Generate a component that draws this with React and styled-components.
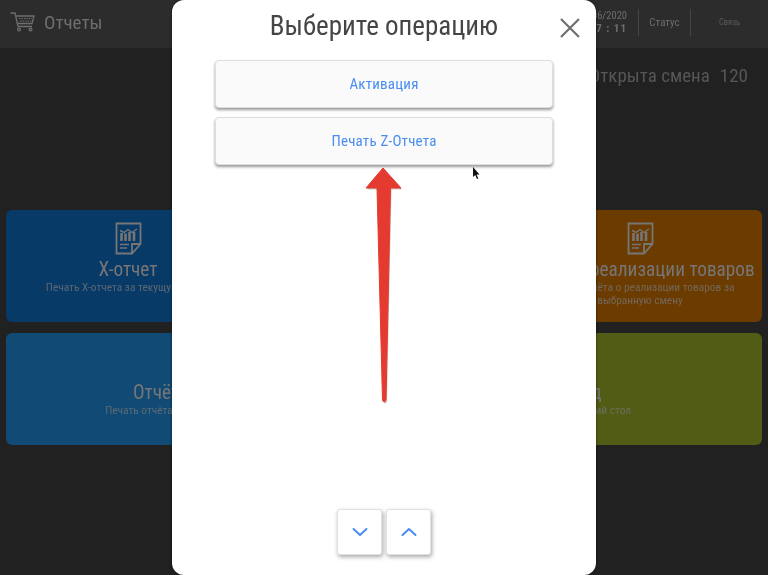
import React from "react";
import styled, { createGlobalStyle } from "styled-components";

const Global = createGlobalStyle`
  html, body { margin: 0; padding: 0; background: #212121; }
  * { box-sizing: border-box; }
`;

const Page = styled.div`
  position: relative;
  width: 768px;
  height: 575px;
  overflow: hidden;
  background: #212121;
  font-family: Roboto, "Liberation Sans", sans-serif;
  font-stretch: condensed;
  filter: blur(0.6px);
`;

const Header = styled.header`
  display: flex;
  align-items: center;
  height: 48px;
  padding-bottom: 4px;
  background: #2c2c2c;
  color: #6e6e6e;
`;

const Brand = styled.div`
  display: flex;
  align-items: center;
  gap: 9px;
  padding-left: 10px;
  font-size: 19px;
  flex: 1;
`;

const DateBlock = styled.div`
  width: 70px;
  font-size: 10.5px;
  line-height: 13px;
  text-align: right;
  padding-right: 11px;
  white-space: nowrap;
  & b { font-weight: 700; font-size: 11px; letter-spacing: 1px; }
`;

const HeaderCell = styled.div`
  width: ${(p) => p.$w}px;
  height: 27px;
  border-left: 1px solid #454545;
  display: flex;
  align-items: center;
  justify-content: center;
  font-size: ${(p) => p.$size}px;
  color: ${(p) => p.$color};
`;

const ShiftRow = styled.div`
  display: flex;
  justify-content: flex-end;
  gap: 10px;
  height: 162px;
  padding: 17px 20px 0 0;
  font-size: 19px;
  line-height: 22px;
  color: #565656;
`;

const Rows = styled.div`
  display: flex;
  flex-direction: column;
  gap: 11px;
  padding: 0 6px;
`;

const Row = styled.div`
  display: flex;
  gap: 12px;
`;

const Card = styled.div`
  width: ${(p) => p.$w}px;
  height: 112px;
  border-radius: 6px;
  background: ${(p) => p.$bg};
  color: #767676;
  display: flex;
  flex-direction: column;
  align-items: center;
  justify-content: ${(p) => (p.$icon ? "flex-start" : "center")};
  padding: ${(p) => (p.$icon ? "12px 20px 0" : "20px 0 0")};
  text-align: center;
`;

const CardTitle = styled.div`
  font-size: 19.3px;
  line-height: 23px;
  margin-top: ${(p) => (p.$icon ? "3px" : "0")};
  white-space: nowrap;
`;

const CardText = styled.div`
  font-size: 11.4px;
  line-height: 13px;
  opacity: 0.75;
  white-space: ${(p) => (p.$nowrap ? "nowrap" : "normal")};
`;

const Modal = styled.section`
  position: absolute;
  left: 172px;
  top: 0;
  width: 424px;
  height: 575px;
  background: #fff;
  border-radius: 12px;
  box-shadow: 0 0 3px rgba(0, 0, 0, 0.6);
  display: flex;
  flex-direction: column;
  align-items: center;
`;

const ModalHead = styled.div`
  position: relative;
  width: 100%;
  height: 60px;
  display: flex;
  justify-content: center;
  padding-top: 10px;
  font-size: 27px;
  line-height: 32px;
  color: #454545;
`;

const Close = styled.svg`
  position: absolute;
  right: 15px;
  top: 17px;
`;

const Options = styled.div`
  display: flex;
  flex-direction: column;
  gap: 9px;
  flex: 1;
`;

const Option = styled.button`
  width: 338px;
  height: 48px;
  background: #fafafa;
  border: 1px solid #dedede;
  border-radius: 4px;
  box-shadow: 0 2px 3px rgba(0, 0, 0, 0.4);
  color: #4a8df0;
  font-family: inherit;
  font-stretch: condensed;
  font-size: 15px;
  letter-spacing: 0.2px;
`;

const Pager = styled.div`
  display: flex;
  gap: 4px;
  margin-bottom: 20px;
`;

const PagerButton = styled.button`
  width: 45px;
  height: 46px;
  padding: 0;
  background: #fff;
  border: 1px solid #e2e2e2;
  border-radius: 3px;
  box-shadow: 1px 2px 4px rgba(0, 0, 0, 0.35);
  display: flex;
  align-items: center;
  justify-content: center;
`;

const Overlay = styled.svg`
  position: absolute;
  left: 0;
  top: 0;
  pointer-events: none;
`;

const CartIcon = () => (
  <svg width="25" height="20" viewBox="0 0 25 20" fill="none" stroke="#6e6e6e" strokeWidth="1.3">
    <path d="M0.5 1H5L8 14.5H22" />
    <path d="M5.6 4H24L22 11.5H7.3" />
    <path d="M9 6.5H22M10 9H21" strokeWidth="1" strokeDasharray="1.5 1" />
    <circle cx="9" cy="17.5" r="1.4" />
    <circle cx="20.5" cy="17.5" r="1.4" />
  </svg>
);

const ReportIcon = () => (
  <svg width="27" height="33" viewBox="0 0 27 33" fill="none" stroke="#767676" strokeWidth="1.8">
    <path d="M1.5 1.5H25.5V22L17 31.5H1.5Z" />
    <path d="M25.5 22H17V31.5" />
    <path d="M5 8.5L9 10.5L13 7.5L17 10.5L22 7" strokeWidth="1.4" />
    <path d="M6.5 11V19M10.5 11.5V19M14.5 10V19M19 10V19" strokeWidth="2.6" />
    <path d="M5 22.5H14M5 26H12" strokeWidth="1.4" />
  </svg>
);

const Chevron = ({ up }) => (
  <svg width="16" height="10" viewBox="0 0 16 10" fill="none" stroke="#4a8df0" strokeWidth="2" strokeLinecap="round" strokeLinejoin="round">
    <path d={up ? "M1.5 8L8 2L14.5 8" : "M1.5 2L8 8L14.5 2"} />
  </svg>
);

export default function App() {
  return (
    <Page>
      <Global />
      <Header>
        <Brand>
          <CartIcon />
          <span>Отчеты</span>
        </Brand>
        <DateBlock>
          <div>05/06/2020</div>
          <b>17 : 11</b>
        </DateBlock>
        <HeaderCell $w={52} $size={11} $color="#6e6e6e">Статус</HeaderCell>
        <HeaderCell $w={78} $size={8.5} $color="#5a5a5a">Связь</HeaderCell>
      </Header>
      <ShiftRow>
        <span>Открыта смена</span>
        <span>120</span>
      </ShiftRow>
      <Rows>
        <Row>
          <Card $w={244} $bg="#083a68" $icon>
            <ReportIcon />
            <CardTitle $icon>X-отчет</CardTitle>
            <CardText>Печать X-отчета за текущую смену</CardText>
          </Card>
          <Card $w={244} $bg="#083a68" $icon />
          <Card $w={244} $bg="#6b3b00" $icon>
            <ReportIcon />
            <CardTitle $icon>Отчёт о реализации товаров</CardTitle>
            <CardText>Печать отчёта о реализации товаров за выбранную смену</CardText>
          </Card>
        </Row>
        <Row>
          <Card $w={300} $bg="#104a75">
            <CardTitle>Отчёт</CardTitle>
            <CardText $nowrap>Печать отчёта смены</CardText>
          </Card>
          <Card $w={60} $bg="#104a75" />
          <Card $w={372} $bg="#525c14">
            <CardTitle>Выход</CardTitle>
            <CardText $nowrap>Выйти на рабочий стол</CardText>
          </Card>
        </Row>
      </Rows>
      <Modal>
        <ModalHead>
          Выберите операцию
          <Close width="22" height="22" viewBox="0 0 22 22" fill="none" stroke="#6f6f6f" strokeWidth="2.2">
            <path d="M2 2L20 20M20 2L2 20" />
          </Close>
        </ModalHead>
        <Options>
          <Option>Активация</Option>
          <Option>Печать Z-Отчета</Option>
        </Options>
        <Pager>
          <PagerButton><Chevron /></PagerButton>
          <PagerButton><Chevron up /></PagerButton>
        </Pager>
      </Modal>
      <Overlay width="768" height="575" viewBox="0 0 768 575">
        <path d="M383 168L401 188L390.5 188L386 400Q384 404 382.5 400L377 188L366 188Z" fill="#c9c9c9" transform="translate(1 1.5)" />
        <path d="M383 168L401 188L390.5 188L386 400Q384 404 382.5 400L377 188L366 188Z" fill="#e53a2f" stroke="#e53a2f" strokeLinejoin="round" />
        <path d="M473 167V177L475.2 175L477 179L478.3 178.4L476.6 174.6L479.5 174.4Z" fill="#111" />
      </Overlay>
    </Page>
  );
}
